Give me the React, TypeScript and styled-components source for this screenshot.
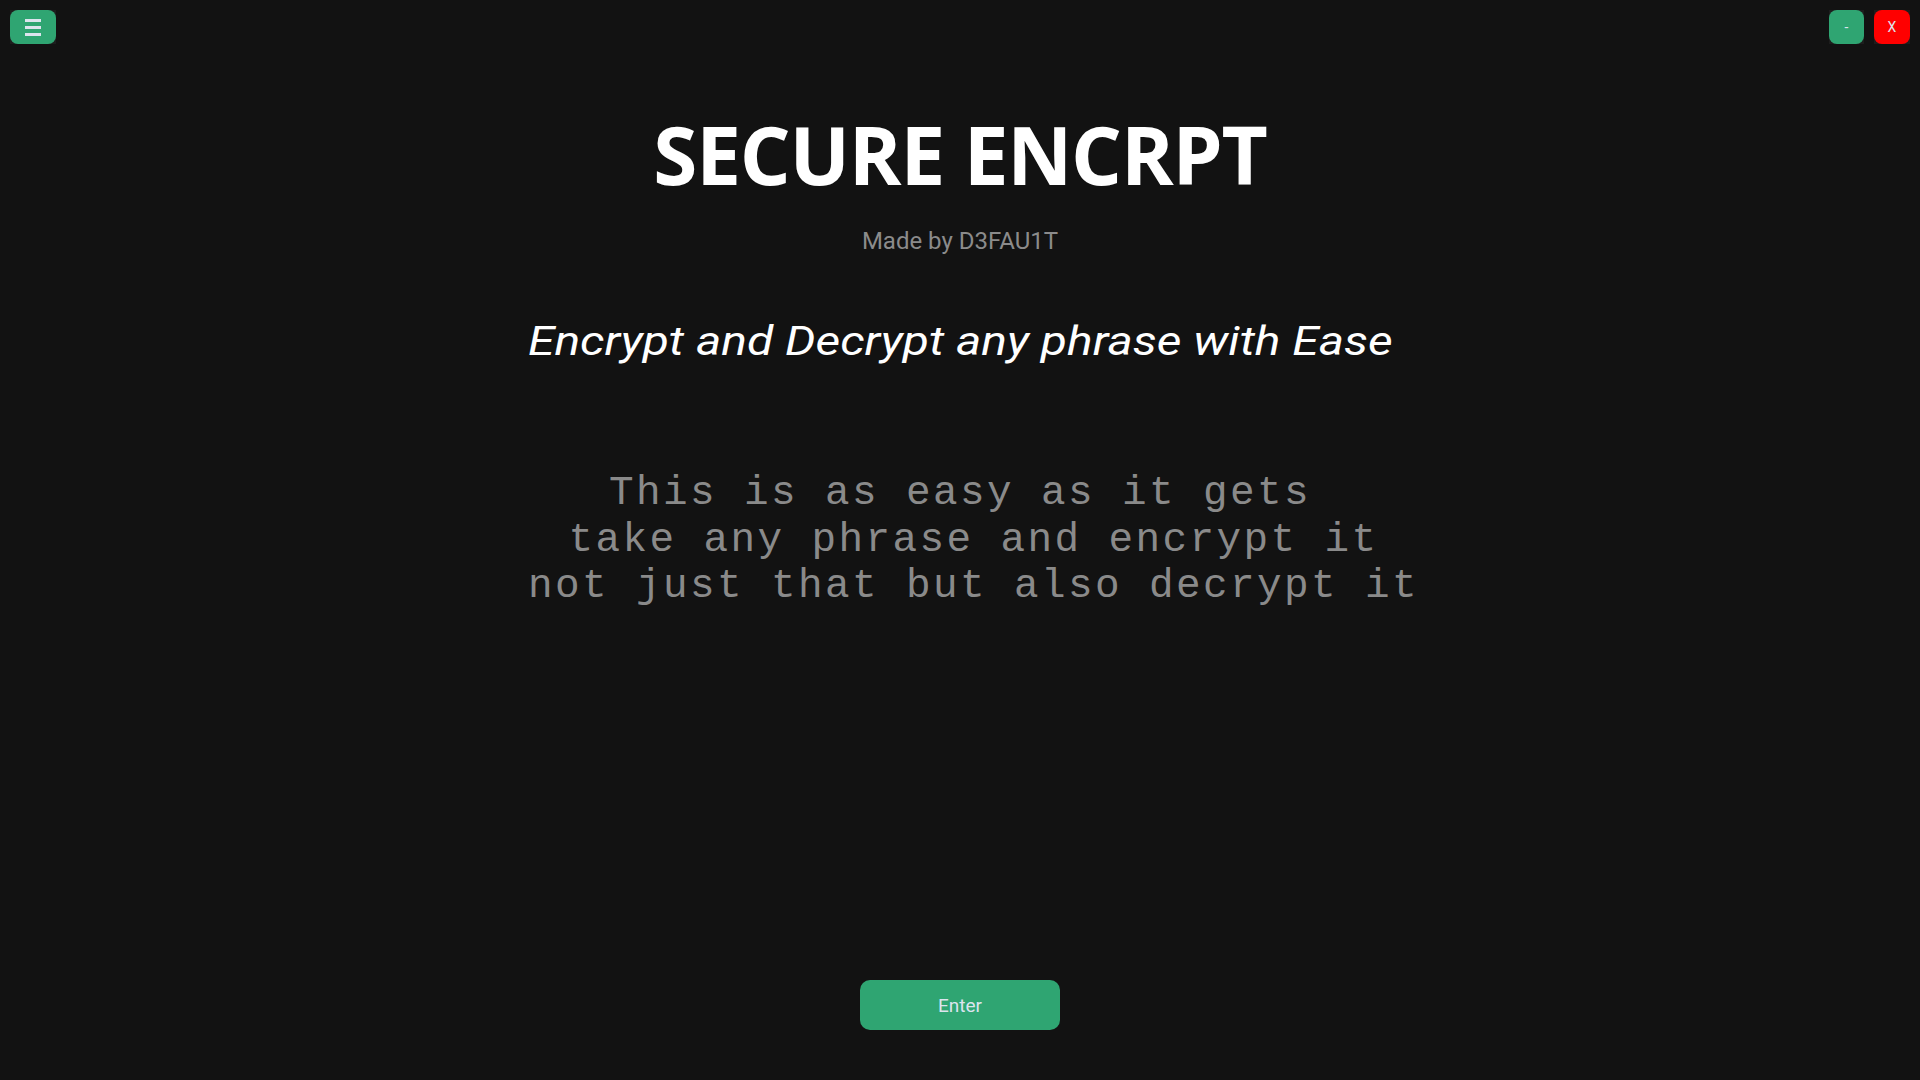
import React from "react";
import styled, { createGlobalStyle } from "styled-components";

const GlobalStyle = createGlobalStyle`
  html, body {
    margin: 0;
    padding: 0;
    background: #121212;
  }
  * { box-sizing: border-box; }
`;

const Page = styled.div`
  min-height: 100vh;
  display: flex;
  flex-direction: column;
  align-items: center;
  padding: 10px 10px 50px 10px;
  background: #121212;
`;

const TopBar = styled.div`
  align-self: stretch;
  display: flex;
  justify-content: space-between;
  align-items: flex-start;
  height: 34px;
`;

const WindowControls = styled.div`
  display: flex;
  gap: 10px;
`;

const Frame = styled.span`
  display: inline-flex;
  background: #1d1d1d;
`;

const TopButton = styled.button<{ $w: number; $color: string }>`
  width: ${(p) => p.$w}px;
  height: 34px;
  border: none;
  border-radius: 8px;
  background: ${(p) => p.$color};
  color: #dce4ee;
  font-family: Roboto, "Liberation Sans", sans-serif;
  font-size: 14px;
  padding: 0;
  display: flex;
  align-items: center;
  justify-content: center;
  cursor: pointer;
`;

const Title = styled.h1`
  margin: 70px 0 0 0;
  font-family: "Open Sans", "Noto Sans", sans-serif;
  font-weight: 700;
  font-size: 80px;
  line-height: 80px;
  letter-spacing: -1.2px;
  color: #ffffff;
  text-align: center;
`;

const Credit = styled.div`
  margin-top: 33px;
  font-family: Roboto, "Liberation Sans", sans-serif;
  font-size: 24px;
  line-height: 28px;
  color: #8b8b8b;
`;

const Tagline = styled.div`
  margin-top: 63px;
  font-family: Roboto, "Liberation Sans", sans-serif;
  font-style: italic;
  font-size: 40px;
  line-height: 48px;
  color: #ffffff;
  transform: scaleX(1.2);
  transform-origin: center;
`;

const Blurb = styled.div`
  margin-top: 104px;
  font-family: "Liberation Mono", "Courier New", monospace;
  font-size: 41px;
  line-height: 46.5px;
  letter-spacing: 2.4px;
  color: #8a8a8a;
  text-align: center;
  white-space: pre;
`;

const Spacer = styled.div`
  flex: 1;
`;

const EnterButton = styled.button`
  width: 200px;
  height: 50px;
  border: none;
  border-radius: 10px;
  background: #2fa572;
  color: #dce4ee;
  font-family: Roboto, "Liberation Sans", sans-serif;
  font-size: 19px;
  cursor: pointer;
`;

const MenuIcon = () => (
  <svg width="16" height="17" viewBox="0 0 16 17">
    <rect x="0" y="0" width="16" height="3" fill="#dce4ee" />
    <rect x="0" y="7" width="16" height="3" fill="#dce4ee" />
    <rect x="0" y="14" width="16" height="3" fill="#dce4ee" />
  </svg>
);

export default function App() {
  return (
    <>
      <GlobalStyle />
      <Page>
        <TopBar>
          <Frame>
            <TopButton $w={46} $color="#2fa572" aria-label="menu">
              <MenuIcon />
            </TopButton>
          </Frame>
          <WindowControls>
            <Frame>
              <TopButton $w={35} $color="#2fa572">-</TopButton>
            </Frame>
            <Frame>
              <TopButton $w={36} $color="#ff0000">X</TopButton>
            </Frame>
          </WindowControls>
        </TopBar>
        <Title>SECURE ENCRPT</Title>
        <Credit>Made by D3FAU1T</Credit>
        <Tagline>Encrypt and Decrypt any phrase with Ease</Tagline>
        <Blurb>
          {"This is as easy as it gets\n take any phrase and encrypt it\n not just that but also decrypt it"}
        </Blurb>
        <Spacer />
        <EnterButton>Enter</EnterButton>
      </Page>
    </>
  );
}
